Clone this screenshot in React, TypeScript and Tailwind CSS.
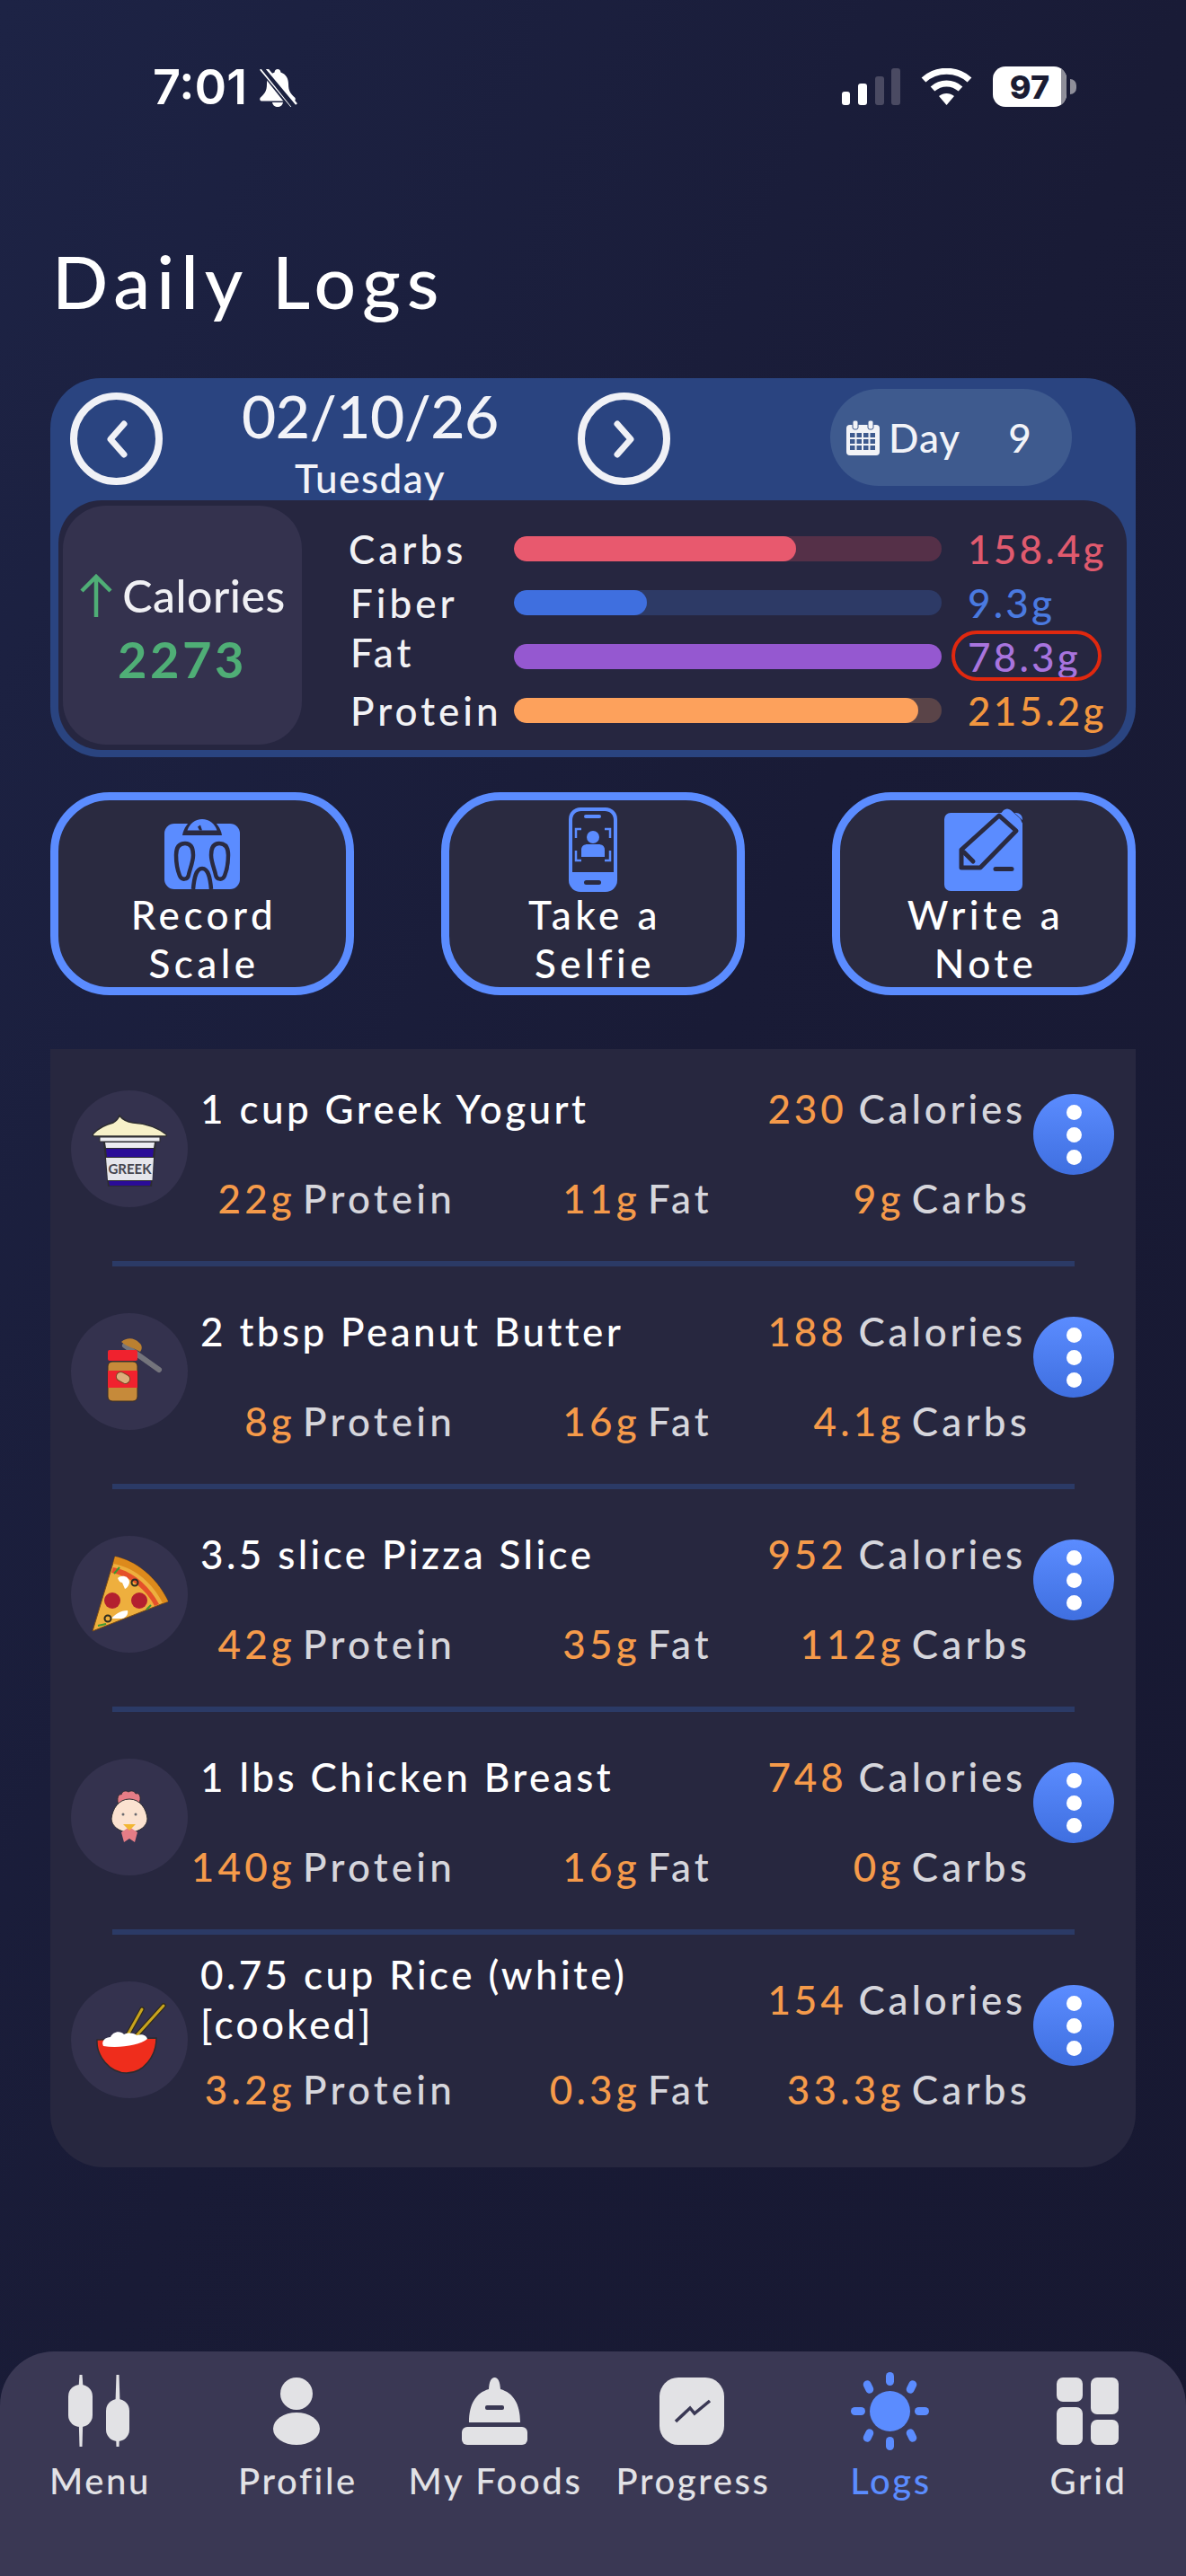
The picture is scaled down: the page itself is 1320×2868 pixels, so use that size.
import React from "react";

const LATO = "font-['Lato','Noto_Sans',sans-serif]";

function BellSlash() {
  return (
    <svg width="44" height="42" viewBox="0 0 44 42" className="ml-[12px] mt-[3px]">
      <path d="M22 0c2 0 3.400 1.500 3.400 3.400 6 2 8.600 7 8.600 13 0 8 2.600 11 7 15 1.500 1.500.8 4-1.500 4H4.500c-2.300 0-3-2.500-1.500-4 4.400-4 7-7 7-15 0-6 2.600-11 8.600-13C18.600 1.500 20 0 22 0z" fill="#fff" />
      <path d="M16 37h12c-.5 3-3 5-6 5s-5.500-2-6-5z" fill="#fff" />
      <path d="M5 -1L40 43" stroke="#1b2140" strokeWidth="9" />
      <path d="M3 0L38 42M8 -3L43 39" stroke="#fff" strokeWidth="2.500" />
      <path d="M5 -1L40 43" stroke="#1b2140" strokeWidth="3" />
    </svg>
  );
}

function Signal() {
  return (
    <svg width="65" height="41" viewBox="0 0 65 41">
      <rect x="0" y="26" width="9" height="15" rx="3" fill="#fff" />
      <rect x="18" y="17" width="10" height="24" rx="3" fill="#fff" />
      <rect x="37" y="9" width="10" height="32" rx="3" fill="#4a4a62" />
      <rect x="55" y="0" width="10" height="41" rx="3" fill="#4a4a62" />
    </svg>
  );
}

function Wifi() {
  return (
    <svg width="57" height="41" viewBox="0 0 57 41" fill="none" stroke="#fff" strokeWidth="7">
      <path d="M3 13C17 0 40 0 54 13" />
      <path d="M13 23C22 15 35 15 44 23" />
      <path d="M28.500 41L20 31c5-4 12-4 17 0z" fill="#fff" stroke="none" />
    </svg>
  );
}

function Calendar() {
  return (
    <svg width="37" height="39" viewBox="0 0 37 39">
      <rect x="0" y="5" width="37" height="34" rx="4" fill="#f2f3f7" />
      <rect x="7" y="0" width="6" height="10" rx="2" fill="#f2f3f7" stroke="#3e5a8e" strokeWidth="1" />
      <rect x="24" y="0" width="6" height="10" rx="2" fill="#f2f3f7" stroke="#3e5a8e" strokeWidth="1" />
      <g fill="#3e5a8e">
        {[14, 21, 28].map((y) =>
          [4, 11.500, 19, 26.500].map((x) => <rect key={`${x}-${y}`} x={x} y={y} width="5.500" height="5" />)
        )}
      </g>
    </svg>
  );
}

function Chevron({ dir }: { dir: "l" | "r" }) {
  return (
    <div className="flex h-[103px] w-[103px] shrink-0 items-center justify-center rounded-full border-[8px] border-[#f0f1f6]">
      <svg width="28" height="44" viewBox="0 0 28 44" fill="none" stroke="#f0f1f6" strokeWidth="7" strokeLinecap="round" strokeLinejoin="round">
        <path d={dir === "l" ? "M22 5L7 22l15 17" : "M6 5l15 17L6 39"} />
      </svg>
    </div>
  );
}

function ScaleIcon() {
  const d = "#2a2a40";
  const b = "#5b8cff";
  return (
    <svg width="84" height="78" viewBox="0 0 84 78" fill="none">
      <rect x="0" y="5" width="84" height="73" rx="11" fill={b} />
      <path d="M20 18C22 6 32 -3 42 -3S62 6 64 18z" fill={d} />
      <path d="M25.500 12.500C28 5 34 0 42 0S56 5 58.500 12.500z" fill={b} />
      <path d="M37 8.500l3-2 2 6h-3z" fill={d} />
      <path d="M23 27C15 27 13 33 13 40C13 50 15 58 17 63C19 68 26 68 27 62C28 56 32 48 32 40C32 33 30 27 23 27Z" stroke={d} strokeWidth="4.500" />
      <path d="M61 27C69 27 71 33 71 40C71 50 69 58 67 63C65 68 58 68 57 62C56 56 52 48 52 40C52 33 54 27 61 27Z" stroke={d} strokeWidth="4.500" />
      <path d="M32 78C33 66 35 55 42 55S51 66 52 78" stroke={d} strokeWidth="4.500" />
    </svg>
  );
}

function PhoneIcon() {
  const d = "#2a2a40";
  const b = "#5b8cff";
  return (
    <svg width="54" height="94" viewBox="0 0 54 94" fill="none">
      <rect x="0" y="0" width="54" height="94" rx="13" fill={b} />
      <path d="M4 14c0-6 4-10 10-10h26c6 0 10 4 10 10v58H4z" fill={d} />
      <rect x="17" y="8" width="19" height="4" rx="2" fill={b} />
      <rect x="17" y="81" width="19" height="5" rx="2.500" fill={d} />
      <ellipse cx="27" cy="33" rx="7" ry="7" fill={b} />
      <path d="M14 55V47c0-4 3-6 7-6h12c4 0 7 2 7 6v8z" fill={b} />
      <path d="M14 24H8v10M40 24h6v10M8 48v11h6M46 48v11h-6" stroke={b} strokeWidth="2.500" />
    </svg>
  );
}

function NoteIcon() {
  const d = "#2a2a40";
  const b = "#5b8cff";
  return (
    <svg width="88" height="93" viewBox="0 0 88 93" fill="none">
      <rect x="0" y="6" width="87" height="87" rx="7" fill={b} />
      <path d="M64 5L71 -0.500L88 15L81 24z" fill={d} />
      <path d="M61 9L66 3Q70 0 74 3L84 12Q88 17 85 21L80 26z" fill={b} />
      <path d="M19 47L61 9L80 26L40 67H19Z" fill={b} stroke={d} strokeWidth="5" strokeLinejoin="round" />
      <path d="M22 50L32 60" stroke={d} strokeWidth="5" strokeLinecap="round" />
      <path d="M57 68.500H75" stroke={d} strokeWidth="5" strokeLinecap="round" />
    </svg>
  );
}

function Yogurt() {
  return (
    <svg viewBox="0 0 130 130" className="h-full w-full">
      <path d="M36 57l5 50h49l5-50z" fill="#2c2c30" />
      <path d="M38 58h55l-1 6H39z" fill="#ececf1" />
      <path d="M39 65h53l-1 9H40z" fill="#2a0c97" />
      <path d="M39 75h53l-1.500 25H41z" fill="#e6e6ec" />
      <path d="M42 101h47l-1 5H43z" fill="#2a0c97" />
      <text x="65.500" y="93" textAnchor="middle" fontFamily="Lato, sans-serif" fontSize="15" fontWeight="700" fill="#45454f">GREEK</text>
      <rect x="32" y="52" width="67" height="5" fill="#ececf1" stroke="#2c2c30" strokeWidth="1" />
      <path d="M25 48c6-6 14-10 22-12 3-2 6-5 7-8 3 4 8 7 15 8 15 1 27 5 37 13 1 2 0 2-2 2H27c-3 0-3-1-2-3z" fill="#f7f1c9" stroke="#2c2c30" strokeWidth="1.500" />
    </svg>
  );
}

function PeanutButter() {
  return (
    <svg viewBox="0 0 130 130" className="h-full w-full">
      <path d="M60 36l38 27" stroke="#74747c" strokeWidth="6" strokeLinecap="round" />
      <path d="M56 32c6-5 14-5 20 1 4 3 3 8 1 10-6-4-14-5-21-11z" fill="#bb8030" />
      <rect x="41" y="41" width="33" height="12" rx="2" fill="#f0222e" />
      <rect x="41" y="54" width="33" height="44" rx="5" fill="#c68a3a" stroke="#3a2c20" strokeWidth="1" />
      <rect x="41" y="64" width="33" height="19" fill="#f0222e" />
      <rect x="50" y="67" width="16" height="10" rx="5" transform="rotate(28 58 72)" fill="#dcae7c" stroke="#7a4a26" strokeWidth="1" />
    </svg>
  );
}

function Pizza() {
  return (
    <svg viewBox="0 0 130 130" className="h-full w-full">
      <path d="M24 106L49 23c24 5 47 24 59 50z" fill="#eeaf3e" stroke="#7a4a14" strokeWidth="1" />
      <path d="M49 23c24 5 47 24 59 50l-6 2C91 52 70 35 47 31z" fill="#dd8a1c" />
      <path d="M47 35c21 4 39 19 51 41l-5 2C83 59 66 45 45 41z" fill="#e5502a" />
      <circle cx="46" cy="72" r="9" fill="#b3202f" />
      <circle cx="76" cy="72" r="9" fill="#b3202f" />
      <path d="M52 47c4-4 12-3 13 4 0 3-2 7-5 8l-3-7c-2 0-4-2-5-5z" fill="#fff" />
      <path d="M45 92c3-4 10-9 18-9 1 3-1 8-6 9z" fill="#fff" />
      <circle cx="41" cy="92" r="3.500" fill="none" stroke="#2c2c20" strokeWidth="2" />
      <circle cx="71" cy="52" r="3.500" fill="none" stroke="#2c2c20" strokeWidth="2" />
      <path d="M30 100l9-2M48 42l6-7M84 82l5-5" stroke="#3c9a32" strokeWidth="2" />
    </svg>
  );
}

function Chicken() {
  return (
    <svg viewBox="0 0 130 130" className="h-full w-full">
      <path d="M54 52c-4-4-2-14 2-12 1-4 5-5 8-3 3-2 7-1 8 2 5-2 7 6 3 12z" fill="#e67d86" stroke="#2c2c30" strokeWidth="1" />
      <path d="M65 45c-12 0-19 11-20 22 0 8 9 15 20 15s20-7 20-15c-1-11-8-22-20-22z" fill="#fbe2d0" stroke="#2c2c30" strokeWidth="1" />
      <path d="M56 82l3 11 6-4 6 4 3-11-9-6z" fill="#e67d86" />
      <path d="M58 73h14l-7 7z" fill="#f2b632" />
      <circle cx="58" cy="62" r="1.500" fill="#6a6a70" />
      <circle cx="72" cy="62" r="1.500" fill="#6a6a70" />
    </svg>
  );
}

function Rice() {
  return (
    <svg viewBox="0 0 130 130" className="h-full w-full">
      <path d="M60 65l19-34M66 68l37-41" stroke="#2f2a1a" strokeWidth="5.500" strokeLinecap="round" />
      <path d="M60 65l19-34M66 68l37-41" stroke="#c9a41e" strokeWidth="3" strokeLinecap="round" />
      <path d="M29 65c-1 18 14 37 33 37s33-19 33-39z" fill="#ef2d1c" stroke="#2c2c30" strokeWidth="1.500" />
      <path d="M36 72c-3-6 3-10 8-10 2-6 11-8 15-3 6-3 12-1 14 1 6-2 11 0 12 4-8 7-32 11-49 8z" fill="#fff" />
    </svg>
  );
}

function MenuIcon() {
  return (
    <svg width="69" height="80" viewBox="0 0 69 80" fill="#e2e2e5">
      <path d="M12.500 0h3l1 14v30l-1 36h-3l-1-36V14z" />
      <rect x="0" y="11" width="27" height="47" rx="13" />
      <path d="M53.500 0h3l1 30v20l-1 30h-3l-1-30V30z" />
      <rect x="42" y="27" width="26" height="47" rx="13" />
    </svg>
  );
}

function ProfileIcon() {
  return (
    <svg width="52" height="75" viewBox="0 0 52 75" fill="#e2e2e5">
      <ellipse cx="26" cy="18" rx="18" ry="18" />
      <ellipse cx="26" cy="57" rx="26" ry="18" />
    </svg>
  );
}

function CloCheIcon() {
  return (
    <svg width="73" height="75" viewBox="0 0 73 75" fill="#e2e2e5">
      <path d="M36.500 0c4 0 6 5 6.500 13 14 4 22 16 22 37H8c0-21 8-33 22-37 .5-8 2.500-13 6.500-13z" />
      <rect x="0" y="55" width="73" height="20" rx="6" />
      <rect x="26" y="31" width="21" height="5" rx="2" fill="#3a3854" />
    </svg>
  );
}

function ProgressIcon() {
  return (
    <svg width="72" height="75" viewBox="0 0 72 75">
      <rect width="72" height="75" rx="21" fill="#e2e2e5" />
      <path d="M18 49l16-15 5 6 17-14" fill="none" stroke="#3a3854" strokeWidth="3.500" />
    </svg>
  );
}

function SunIcon() {
  const b = "#5b8cff";
  return (
    <svg width="87" height="87" viewBox="0 0 87 87" fill={b}>
      <circle cx="43.500" cy="43.500" r="22.500" />
      <rect x="39" y="0" width="9" height="15" rx="4.500" />
      <rect x="39" y="72" width="9" height="15" rx="4.500" />
      <rect x="0" y="39" width="16" height="9" rx="4.500" />
      <rect x="71" y="39" width="16" height="9" rx="4.500" />
      <rect x="15" y="9" width="9" height="15" rx="4.500" transform="rotate(-25 19.500 16.500)" />
      <rect x="63" y="9" width="9" height="15" rx="4.500" transform="rotate(25 67.500 16.500)" />
      <rect x="15" y="63" width="9" height="15" rx="4.500" transform="rotate(25 19.500 70.500)" />
      <rect x="63" y="63" width="9" height="15" rx="4.500" transform="rotate(-25 67.500 70.500)" />
    </svg>
  );
}

function GridIcon() {
  return (
    <svg width="69" height="75" viewBox="0 0 69 75" fill="#e2e2e5">
      <rect x="0" y="0" width="29" height="27" rx="7" />
      <rect x="0" y="33" width="29" height="42" rx="7" />
      <rect x="38" y="0" width="31" height="41" rx="7" />
      <rect x="38" y="47" width="31" height="28" rx="7" />
    </svg>
  );
}

function MacroBar({
  label,
  labelClass,
  track,
  fill,
  pct,
  value,
  valueClass,
  ring,
}: {
  label: string;
  labelClass: string;
  track: string;
  fill: string;
  pct: number;
  value: string;
  valueClass: string;
  ring?: boolean;
}) {
  return (
    <div className="flex h-[60px] items-center">
      <div className={`text-[44px] leading-[60px] tracking-[4px] text-[#f2f2f5] ${labelClass}`}>{label}</div>
      <div className={`h-[28px] w-[476px] overflow-hidden rounded-full ${track}`}>
        <div className={`h-full rounded-full ${fill}`} style={{ width: `${pct}%` }} />
      </div>
      <div className={`relative ml-[29px] whitespace-nowrap text-[44px] leading-[60px] tracking-[3.2px] ${valueClass}`}>
        {value}
        {ring && <div className="absolute left-[-18px] top-[1px] h-[56px] w-[167px] rounded-full border-[4px] border-[#e0280f]" />}
      </div>
    </div>
  );
}

function ActionButton({ icon, lines, iconClass }: { icon: React.ReactNode; lines: [string, string]; iconClass: string }) {
  return (
    <div className="flex h-[226px] w-[338px] flex-col items-center rounded-[66px] border-[9px] border-[#5b8cff] bg-[#2a2a40]">
      <div className={`flex h-[100px] shrink-0 justify-center ${iconClass}`}>{icon}</div>
      <div className="pl-[4px] text-center text-[44px] leading-[54px] tracking-[4.5px] text-white">
        <div>{lines[0]}</div>
        <div>{lines[1]}</div>
      </div>
    </div>
  );
}

type Food = {
  name: string;
  cal: string;
  p: string;
  f: string;
  c: string;
  img: React.ReactNode;
};

const foods: Food[] = [
  { name: "1 cup Greek Yogurt", cal: "230", p: "22g", f: "11g", c: "9g", img: <Yogurt /> },
  { name: "2 tbsp Peanut Butter", cal: "188", p: "8g", f: "16g", c: "4.1g", img: <PeanutButter /> },
  { name: "3.5 slice Pizza Slice", cal: "952", p: "42g", f: "35g", c: "112g", img: <Pizza /> },
  { name: "1 lbs Chicken Breast", cal: "748", p: "140g", f: "16g", c: "0g", img: <Chicken /> },
  { name: "0.75 cup Rice (white) [cooked]", cal: "154", p: "3.2g", f: "0.3g", c: "33.3g", img: <Rice /> },
];

function Macro({ v, label, w }: { v: string; label: string; w: string }) {
  return (
    <div className={`flex justify-end gap-[8px] whitespace-nowrap text-[44px] leading-[55px] tracking-[4.2px] ${w}`}>
      <span className="text-[#f59a4a]">{v}</span>
      <span className="text-[#d6d6dc]">{label}</span>
    </div>
  );
}

function FoodRow({ food, first, last }: { food: Food; first: boolean; last: boolean }) {
  return (
    <div className={first ? "pt-[11px]" : "pt-[17px]"}>
      <div className="flex pl-[23px]">
        <div className="mt-[35px] h-[130px] w-[130px] shrink-0 self-start rounded-full bg-[#34324e]">{food.img}</div>
        <div className="w-[941px] shrink-0">
          <div className="flex h-[110px] items-center justify-between pl-[14px] pr-[8px]">
            <div className="w-[500px] text-[44px] leading-[55px] tracking-[3.4px] text-white">{food.name}</div>
            <div className="flex gap-[13px] whitespace-nowrap text-[44px] leading-[55px] tracking-[3.8px]">
              <span className="text-[#f59a4a]">{food.cal}</span>
              <span className="text-[#d6d6dc]">Calories</span>
            </div>
          </div>
          <div className="mt-[18px] flex">
            <Macro v={food.p} label="Protein" w="w-[298px]" />
            <Macro v={food.f} label="Fat" w="w-[286px]" />
            <Macro v={food.c} label="Carbs" w="w-[354px]" />
          </div>
        </div>
        <div className="mt-[39px] flex h-[90px] w-[90px] shrink-0 flex-col items-center justify-center gap-[8px] self-start rounded-full bg-linear-to-b from-[#5b8cff] to-[#3f6fe0]">
          <div className="h-[17px] w-[17px] rounded-full bg-white" />
          <div className="h-[17px] w-[17px] rounded-full bg-white" />
          <div className="h-[17px] w-[17px] rounded-full bg-white" />
        </div>
      </div>
      {last ? (
        <div className="h-[59px]" />
      ) : (
        <div className="mt-[42px] ml-[69px] h-[6px] w-[1071px] bg-[#2b3a66]" />
      )}
    </div>
  );
}

function NavItem({ icon, label, active }: { icon: React.ReactNode; label: string; active?: boolean }) {
  return (
    <div className="flex w-[220px] flex-col items-center">
      <div className="flex h-[100px] items-center justify-center">{icon}</div>
      <div className={`mt-[3px] pl-[3px] text-[40px] leading-[50px] tracking-[2.6px] ${active ? "text-[#5b8cff]" : "text-[#e2e2e6]"}`}>{label}</div>
    </div>
  );
}

export default function App() {
  return (
    <div className={`flex h-[2868px] w-[1320px] flex-col overflow-hidden bg-[linear-gradient(115deg,#1d2345_0%,#191b36_50%,#171831_100%)] font-medium ${LATO}`}>
      {/* status bar */}
      <div className="flex items-center justify-between pl-[170px] pr-[122px] pt-[74px]">
        <div className="flex h-[45px] items-center">
          <span className="font-['Inter',sans-serif] text-[54px] font-semibold leading-[45px] text-white">7:01</span>
          <BellSlash />
        </div>
        <div className="flex h-[45px] items-center">
          <Signal />
          <div className="ml-[23px]">
            <Wifi />
          </div>
          <div className="relative ml-[23px] flex h-[45px] w-[82px] items-center justify-center overflow-hidden rounded-[14px] bg-white">
            <span className="font-['Inter',sans-serif] text-[36px] font-extrabold leading-none text-[#1a1c33]">97</span>
            <div className="absolute right-0 top-0 h-full w-[6px] bg-[#8f8f9a]" />
          </div>
          <div className="ml-[4px] h-[17px] w-[7px] rounded-r-full bg-[#8f8f9a]" />
        </div>
      </div>

      {/* title */}
      <h1 className="mt-[143px] pl-[58px] text-[82px] font-medium leading-[100px] tracking-[7px] text-white">Daily Logs</h1>

      {/* summary card */}
      <div className="mx-[56px] mt-[59px] h-[422px] rounded-[56px] bg-[#2a4480] pb-[8px] pl-[9px] pr-[10px]">
        <div className="flex h-[136px] items-start pl-[13px] pt-[16px]">
          <Chevron dir="l" />
          <div className="ml-[46px] mt-[-10px] w-[370px] text-center text-[#f2f3f8]">
            <div className="text-[66px] leading-[72px] tracking-[-0.5px]">02/10/26</div>
            <div className="mt-[10px] text-[44px] leading-[46px] tracking-[1.5px]">Tuesday</div>
          </div>
          <div className="ml-[46px]">
            <Chevron dir="r" />
          </div>
          <div className="ml-[178px] mt-[-4px] flex h-[108px] w-[269px] items-center rounded-[54px] bg-[#3e5a8e] pl-[18px] text-[44px] tracking-[1px] text-[#f2f3f8]">
            <Calendar />
            <span className="ml-[10px]">Day</span>
            <span className="ml-[53px]">9</span>
          </div>
        </div>
        <div className="flex h-[278px] rounded-[48px] bg-[#262640] pl-[5px] pt-[6px]">
          <div className="flex h-[266px] w-[266px] shrink-0 flex-col items-center rounded-[48px] bg-[#34324e] pt-[72px]">
            <div className="flex items-center text-[#f0f0f4]">
              <svg width="38" height="48" viewBox="0 0 38 48" fill="none" stroke="#4fae76" strokeWidth="4.500">
                <path d="M19 48V3M3 19L19 3l16 16" />
              </svg>
              <span className="ml-[10px] text-[50px] leading-[56px] tracking-[0.5px]">Calories</span>
            </div>
            <div className="mt-[11px] text-[56px] font-bold leading-[64px] tracking-[3.5px] text-[#4fae76]">2273</div>
          </div>
          <div className="ml-[54px] flex flex-col pt-[18px]">
            <MacroBar label="Carbs" labelClass="ml-[-2px] w-[184px]" track="bg-[#553048]" fill="bg-[#e8596e]" pct={66} value="158.4g" valueClass="text-[#e05a6e]" />
            <MacroBar label="Fiber" labelClass="w-[182px]" track="bg-[#2d3a66]" fill="bg-[#3f6fdf]" pct={31} value="9.3g" valueClass="text-[#4a7ae0]" />
            <MacroBar label="Fat" labelClass="w-[182px] -translate-y-[5px]" track="bg-[#5a3d7c]" fill="bg-[#9558d0]" pct={100} value="78.3g" valueClass="text-[#a874de]" ring />
            <MacroBar label="Protein" labelClass="w-[182px]" track="bg-[#5a4448]" fill="bg-[#fda15c]" pct={94.5} value="215.2g" valueClass="text-[#f2963f]" />
          </div>
        </div>
      </div>

      {/* actions */}
      <div className="mx-[56px] mt-[39px] flex justify-between">
        <ActionButton icon={<ScaleIcon />} lines={["Record", "Scale"]} iconClass="pt-[21px]" />
        <ActionButton icon={<PhoneIcon />} lines={["Take a", "Selfie"]} iconClass="pt-[8px]" />
        <ActionButton icon={<NoteIcon />} lines={["Write a", "Note"]} iconClass="pt-[8px]" />
      </div>

      {/* food list */}
      <div className="mx-[56px] mt-[60px] rounded-b-[60px] bg-[#27273f]">
        {foods.map((f, i) => (
          <FoodRow key={f.name} food={f} first={i === 0} last={i === foods.length - 1} />
        ))}
      </div>

      {/* tab bar */}
      <div className="mt-auto flex h-[250px] rounded-t-[60px] bg-[#3a3854] pt-[16px]">
        <NavItem icon={<MenuIcon />} label="Menu" />
        <NavItem icon={<ProfileIcon />} label="Profile" />
        <NavItem icon={<CloCheIcon />} label="My Foods" />
        <NavItem icon={<ProgressIcon />} label="Progress" />
        <NavItem icon={<SunIcon />} label="Logs" active />
        <NavItem icon={<GridIcon />} label="Grid" />
      </div>
    </div>
  );
}
